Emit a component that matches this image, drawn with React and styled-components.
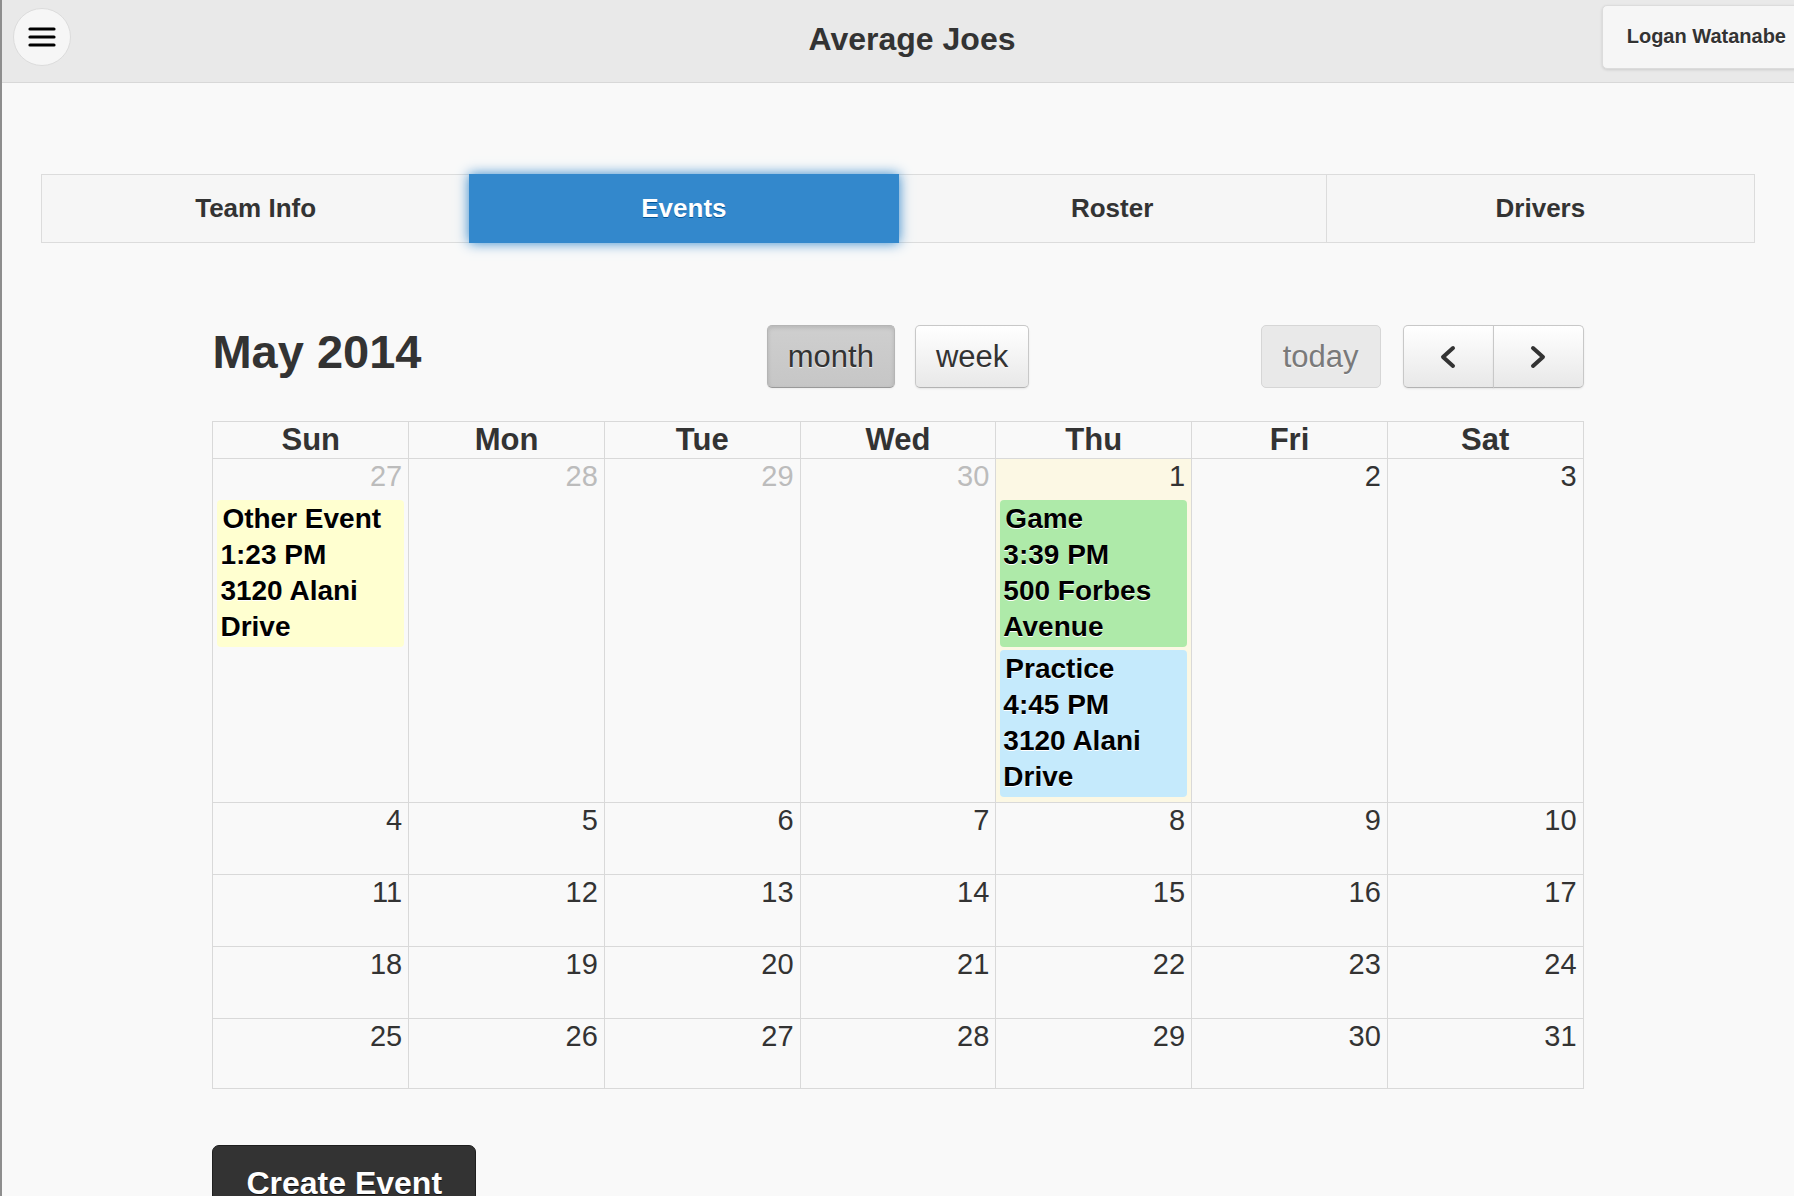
import React from 'react';
import styled, { createGlobalStyle } from 'styled-components';

const Global = createGlobalStyle`
  html, body { margin: 0; padding: 0; background: #f9f9f9; overflow: hidden; }
  body { font-family: "Liberation Sans", Arial, Helvetica, sans-serif; color: #333; }
  * { box-sizing: border-box; }
`;

const Page = styled.div`
  width: 1794px;
  min-height: 1196px;
  overflow: hidden;
  border-left: 2px solid #8e8e8e;
  background: #f9f9f9;
`;

const Header = styled.header`
  width: 1822px;
  height: 83px;
  padding: 0 13px 9px 11px;
  display: grid;
  grid-template-columns: 1fr auto 1fr;
  align-items: center;
  background: #e9e9e9;
  border-bottom: 1px solid #d8d8d8;
`;

const MenuButton = styled.button`
  width: 58px;
  height: 58px;
  border-radius: 50%;
  border: 1px solid #dcdcdc;
  background: #f6f6f6;
  display: flex;
  align-items: center;
  justify-content: center;
  padding: 0;
  justify-self: start;
`;

const Title = styled.h1`
  margin: 0;
  padding-top: 5px;
  font-size: 32px;
  font-weight: bold;
  color: #333;
`;

const UserButton = styled.button`
  justify-self: end;
  height: 64px;
  padding: 0 24px;
  font-family: "Liberation Sans", Arial, sans-serif;
  font-size: 20px;
  font-weight: bold;
  color: #333;
  background: #f6f6f6;
  border: 1px solid #dcdcdc;
  border-radius: 5px;
  box-shadow: 0 1px 3px rgba(0, 0, 0, 0.12);
  text-shadow: 0 1px 0 #fff;
`;

const Main = styled.main`
  padding: 91px 39px 0 39px;
`;

const TabBar = styled.nav`
  display: flex;
  height: 69px;
`;

const Tab = styled.div`
  flex: 1;
  display: flex;
  align-items: center;
  justify-content: center;
  margin-left: -1px;
  border: 1px solid ${p => (p.$active ? '#3388cc' : '#dcdcdc')};
  background: ${p => (p.$active ? '#3388cc' : '#f6f6f6')};
  color: ${p => (p.$active ? '#fff' : '#333')};
  font-size: 26px;
  font-weight: bold;
  text-shadow: ${p => (p.$active ? '0 1px 0 #005599' : '0 1px 0 #f3f3f3')};
  box-shadow: ${p => (p.$active ? '0 0 12px #3388cc' : 'none')};
  position: relative;
  z-index: ${p => (p.$active ? 1 : 0)};
  &:first-child { margin-left: 0; }
`;

const Calendar = styled.section`
  width: 80%;
  margin: 81px auto 0;
`;

const Toolbar = styled.div`
  display: grid;
  grid-template-columns: 1fr auto 1fr;
  align-items: center;
  height: 63px;
  margin-bottom: 34px;
`;

const MonthTitle = styled.h2`
  margin: 0;
  padding-bottom: 10px;
  font-size: 47px;
  font-weight: bold;
  color: #333;
  justify-self: start;
`;

const ButtonRow = styled.div`
  display: flex;
  align-items: center;
  gap: ${p => p.$gap || 20}px;
  justify-self: ${p => p.$align || 'center'};
`;

const Group = styled.div`
  display: flex;
`;

const CalButton = styled.button`
  height: 63px;
  padding: 0 ${p => p.$pad || 20}px;
  font-family: "Liberation Sans", Arial, sans-serif;
  font-size: 31px;
  color: #333;
  border: 1px solid #c8c8c8;
  border-bottom-color: #b3b3b3;
  border-radius: 5px;
  background: linear-gradient(#ffffff, #e8e8e8);
  box-shadow: inset 0 1px 0 rgba(255, 255, 255, 0.3), 0 1px 2px rgba(0, 0, 0, 0.08);
  text-shadow: 0 1px 1px rgba(255, 255, 255, 0.75);
  display: flex;
  align-items: center;
  justify-content: center;

  &[data-active='true'] {
    background: linear-gradient(#cfcfcf, #c6c6c6);
    border-color: #b5b5b5;
    border-bottom-color: #999;
    box-shadow: inset 0 2px 4px rgba(0, 0, 0, 0.12), 0 1px 2px rgba(0, 0, 0, 0.05);
  }

  &:disabled {
    background: #e9e9e9;
    color: #7a7a7a;
    border-color: #d6d6d6;
    box-shadow: none;
  }
`;

const GroupButton = styled(CalButton)`
  width: 91px;
  padding: 0;
  border-radius: ${p => (p.$first ? '5px 0 0 5px' : '0 5px 5px 0')};
  margin-left: ${p => (p.$first ? 0 : -1)}px;
`;

const Grid = styled.div`
  display: grid;
  grid-template-columns: repeat(7, 1fr);
  border-top: 1px solid #d9d9d9;
  border-left: 1px solid #d9d9d9;
`;

const DayName = styled.div`
  height: 37px;
  line-height: 36px;
  text-align: center;
  font-size: 31px;
  font-weight: bold;
  color: #333;
  border-right: 1px solid #d9d9d9;
  border-bottom: 1px solid #d9d9d9;
`;

const Cell = styled.div`
  min-height: ${p => p.$h}px;
  background: ${p => (p.$today ? '#fcf8e4' : 'transparent')};
  border-right: 1px solid #d9d9d9;
  border-bottom: 1px solid #d9d9d9;
  padding-bottom: 5px;
`;

const DayNum = styled.div`
  height: 41px;
  line-height: 34px;
  padding: 0 6px;
  text-align: right;
  font-size: 29px;
  color: ${p => (p.$other ? '#bcbcbc' : '#333')};
`;

const Events = styled.div`
  display: flex;
  flex-direction: column;
  gap: 3px;
  padding: 0 4px;
`;

const Event = styled.div`
  background: ${p => p.$bg};
  border-radius: 4px;
  padding: 1px 3px 2px;
  font-size: 28px;
  font-weight: bold;
  line-height: 36px;
  color: #000;
  text-shadow: 0 1px 0 #fff;
`;

const EventTitle = styled.div`
  padding-left: 2px;
`;

const EventLine = styled.div``;

const CreateButton = styled.button`
  margin-top: 56px;
  padding: 19px 33px 24px;
  font-family: "Liberation Sans", Arial, sans-serif;
  font-size: 32px;
  font-weight: bold;
  color: #fff;
  background: #333;
  border: 1px solid #1f1f1f;
  border-radius: 7px;
  text-shadow: 0 1px 0 #111;
`;

const Burger = () => (
  <svg width="28" height="22" viewBox="0 0 28 22">
    <g stroke="#000" strokeWidth="3.2" strokeLinecap="round">
      <line x1="2" y1="3" x2="26" y2="3" />
      <line x1="2" y1="11" x2="26" y2="11" />
      <line x1="2" y1="19" x2="26" y2="19" />
    </g>
  </svg>
);

const Chevron = ({ dir }) => (
  <svg width="22" height="24" viewBox="0 0 22 24">
    <polyline
      points={dir === 'left' ? '16,3 6,12 16,21' : '6,3 16,12 6,21'}
      fill="none"
      stroke="#333"
      strokeWidth="4"
      strokeLinecap="round"
      strokeLinejoin="round"
    />
  </svg>
);

const days = ['Sun', 'Mon', 'Tue', 'Wed', 'Thu', 'Fri', 'Sat'];

const weeks = [
  { h: 344, days: [27, 28, 29, 30, 1, 2, 3], other: [0, 1, 2, 3] },
  { h: 72, days: [4, 5, 6, 7, 8, 9, 10] },
  { h: 72, days: [11, 12, 13, 14, 15, 16, 17] },
  { h: 72, days: [18, 19, 20, 21, 22, 23, 24] },
  { h: 70, days: [25, 26, 27, 28, 29, 30, 31] },
];

const eventsByCell = {
  '0-0': [{ bg: '#ffffd0', title: 'Other Event', time: '1:23 PM', place: '3120 Alani Drive' }],
  '0-4': [
    { bg: '#aeeaa9', title: 'Game', time: '3:39 PM', place: '500 Forbes Avenue' },
    { bg: '#c5eafc', title: 'Practice', time: '4:45 PM', place: '3120 Alani Drive' },
  ],
};

export default function App() {
  return (
    <Page>
      <Global />
      <Header>
        <MenuButton aria-label="menu">
          <Burger />
        </MenuButton>
        <Title>Average Joes</Title>
        <UserButton>Logan Watanabe</UserButton>
      </Header>
      <Main>
        <TabBar>
          <Tab>Team Info</Tab>
          <Tab $active>Events</Tab>
          <Tab>Roster</Tab>
          <Tab>Drivers</Tab>
        </TabBar>
        <Calendar>
          <Toolbar>
            <MonthTitle>May 2014</MonthTitle>
            <ButtonRow>
              <CalButton data-active="true">month</CalButton>
              <CalButton>week</CalButton>
            </ButtonRow>
            <ButtonRow $align="end" $gap={22}>
              <CalButton disabled $pad={21}>today</CalButton>
              <Group>
                <GroupButton $first aria-label="previous">
                  <Chevron dir="left" />
                </GroupButton>
                <GroupButton aria-label="next">
                  <Chevron dir="right" />
                </GroupButton>
              </Group>
            </ButtonRow>
          </Toolbar>
          <Grid>
            {days.map(d => (
              <DayName key={d}>{d}</DayName>
            ))}
            {weeks.map((w, wi) =>
              w.days.map((n, di) => {
                const evs = eventsByCell[`${wi}-${di}`] || [];
                return (
                  <Cell key={`${wi}-${di}`} $h={w.h} $today={wi === 0 && di === 4}>
                    <DayNum $other={w.other && w.other.includes(di)}>{n}</DayNum>
                    {evs.length > 0 && (
                      <Events>
                        {evs.map(e => (
                          <Event key={e.title} $bg={e.bg}>
                            <EventTitle>{e.title}</EventTitle>
                            <EventLine>{e.time}</EventLine>
                            <EventLine>{e.place}</EventLine>
                          </Event>
                        ))}
                      </Events>
                    )}
                  </Cell>
                );
              })
            )}
          </Grid>
          <CreateButton>Create Event</CreateButton>
        </Calendar>
      </Main>
    </Page>
  );
}
